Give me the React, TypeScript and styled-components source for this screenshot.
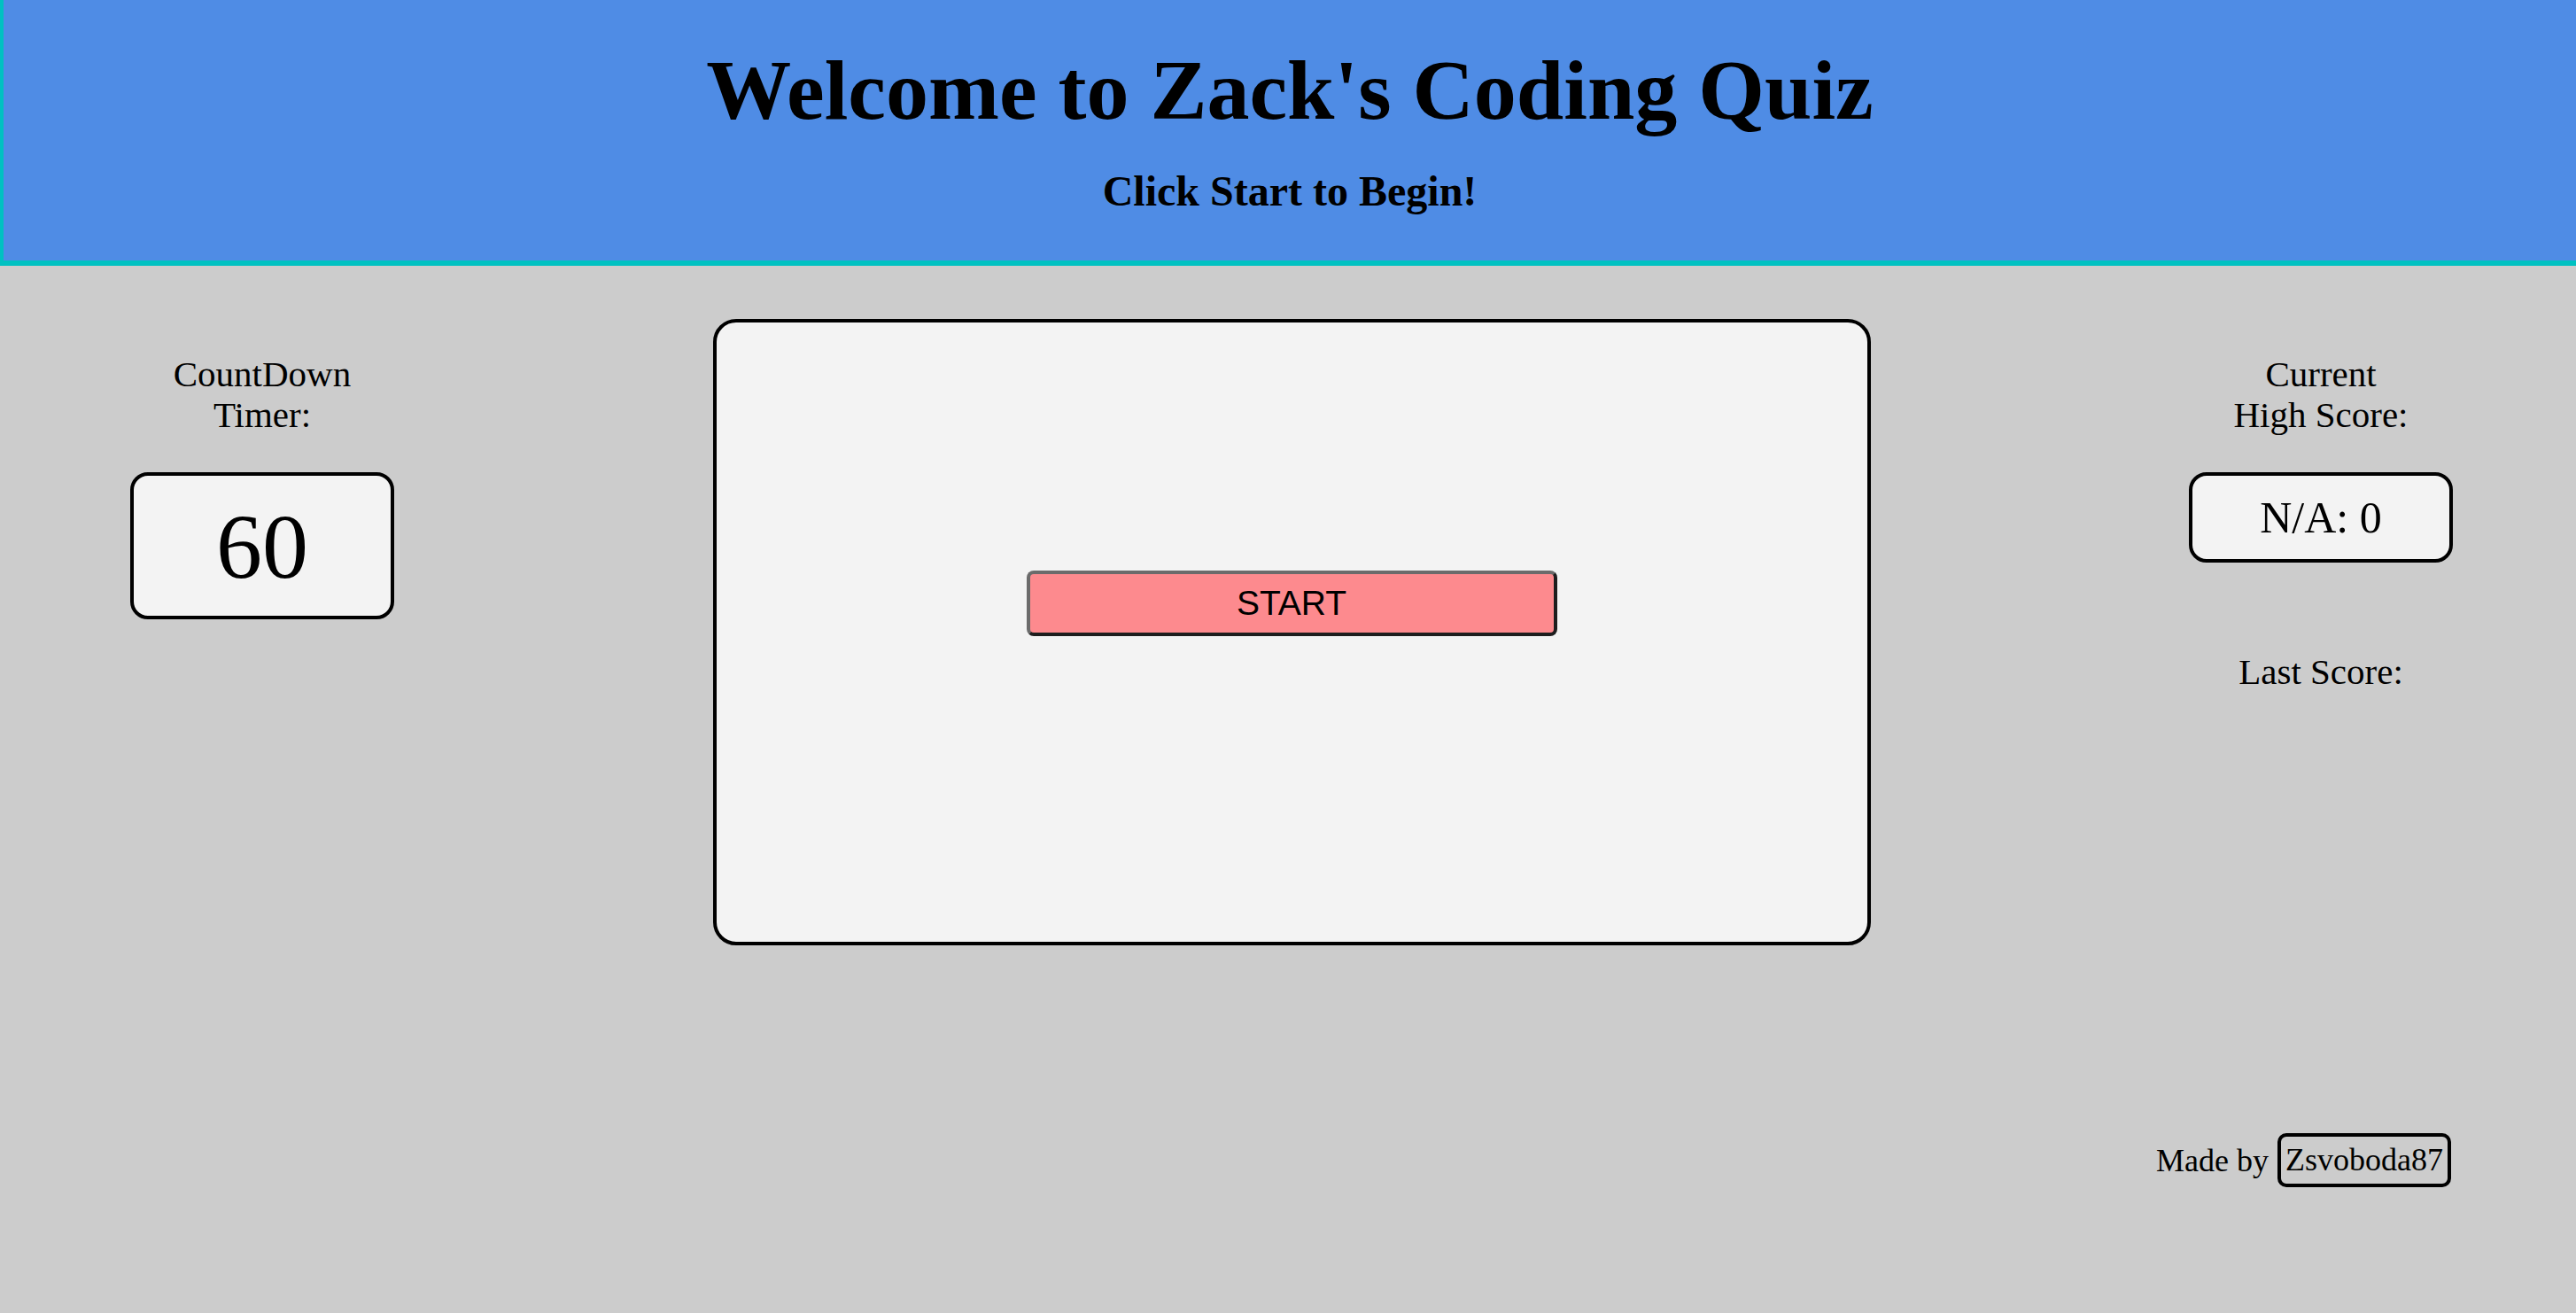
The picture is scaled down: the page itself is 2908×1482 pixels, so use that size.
import styled, { createGlobalStyle } from "styled-components";

const GlobalStyle = createGlobalStyle`
	html, body {
		margin: 0;
		padding: 0;
		background-color: #cccccc;
		font-family: "Liberation Serif", "Times New Roman", serif;
		color: #000;
	}
	#root {
		min-height: 100vh;
	}
`;

const Header = styled.header`
	display: flex;
	flex-direction: column;
	align-items: center;
	gap: 30px;

	height: 247px;
	padding-top: 47px;

	background-color: #4f8ce5;
	border-left: 4px solid #00c1c1;
	border-bottom: 6px solid #00c1c1;
`;

const Title = styled.h1`
	margin: 0;
	font-size: 96px;
	line-height: 110px;
	font-weight: bold;
`;

const Subtitle = styled.h3`
	margin: 0;
	font-size: 48px;
	line-height: 58px;
	font-weight: bold;
`;

const Main = styled.main`
	display: flex;
	justify-content: space-between;
	align-items: flex-start;

	padding: 60px 139px 0 147px;
`;

const SideColumn = styled.aside`
	display: flex;
	flex-direction: column;
	align-items: center;
	width: 298px;
	padding-top: 39px;
`;

const Label = styled.div<{ $gap?: number }>`
	font-size: 41px;
	line-height: 46px;
	text-align: center;
	margin-bottom: ${(p) => p.$gap ?? 42}px;
`;

const ScoreBox = styled.div<{ $height: number; $size: number }>`
	display: flex;
	align-items: center;
	justify-content: center;

	width: 100%;
	height: ${(p) => p.$height}px;
	box-sizing: border-box;

	border: 4px solid #000;
	border-radius: 20px;
	background-color: #f3f3f3;
	font-size: ${(p) => p.$size}px;
`;

const LastScore = styled(Label)`
	margin-top: 100px;
`;

const QuizCard = styled.section`
	display: flex;
	flex-direction: column;
	align-items: center;

	width: 1307px;
	height: 707px;
	padding-top: 280px;
	box-sizing: border-box;

	border: 4px solid #000;
	border-radius: 26px;
	background-color: #f3f3f3;
`;

const StartButton = styled.button`
	width: 599px;
	height: 74px;
	box-sizing: border-box;

	font-family: "Liberation Sans", Arial, sans-serif;
	font-size: 39px;
	color: #000;

	background-color: #fd8a8e;
	border: 4px solid;
	border-color: #6b6b6b #1e1e1e #1e1e1e #6b6b6b;
	border-radius: 8px;
	cursor: pointer;
`;

const Footer = styled.footer`
	display: flex;
	align-items: center;
	justify-content: flex-end;
	gap: 10px;

	align-self: flex-end;
	margin-top: 498px;
	margin-right: 2px;
	font-size: 36px;
	white-space: nowrap;
`;

const Handle = styled.span`
	display: inline-block;
	padding: 8px 5px 9px;
	border: 4px solid #000;
	border-radius: 10px;
	line-height: 1;
`;

export default function App() {
	return (
		<>
			<GlobalStyle />
			<Header>
				<Title>Welcome to Zack's Coding Quiz</Title>
				<Subtitle>Click Start to Begin!</Subtitle>
			</Header>
			<Main>
				<SideColumn>
					<Label>
						CountDown
						<br />
						Timer:
					</Label>
					<ScoreBox $height={166} $size={104}>60</ScoreBox>
				</SideColumn>

				<QuizCard>
					<StartButton>START</StartButton>
				</QuizCard>

				<SideColumn>
					<Label>
						Current
						<br />
						High Score:
					</Label>
					<ScoreBox $height={102} $size={50}>N/A: 0</ScoreBox>
					<LastScore $gap={0}>Last Score:</LastScore>
					<Footer>
						Made by <Handle>Zsvoboda87</Handle>
					</Footer>
				</SideColumn>
			</Main>
		</>
	);
}
